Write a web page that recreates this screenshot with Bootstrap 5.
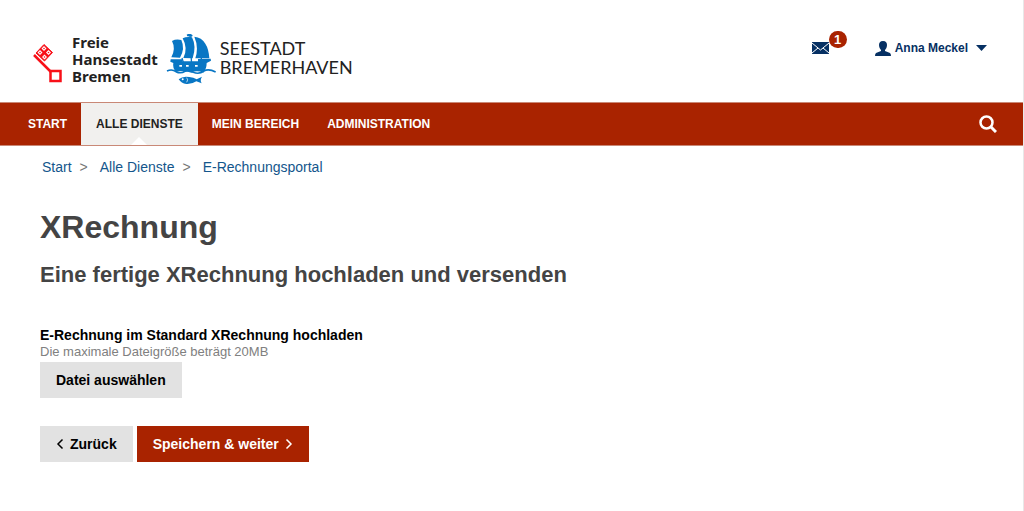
<!DOCTYPE html>
<html lang="de">
<head>
<meta charset="utf-8">
<meta name="viewport" content="width=device-width, initial-scale=1">
<title>XRechnung – E-Rechnungsportal</title>
<link href="https://cdn.jsdelivr.net/npm/bootstrap@5.3.0/dist/css/bootstrap.min.css" rel="stylesheet">
<style>
  :root { --brand: #a92300; --navy: #063063; --link: #14568c; }
  body { font-family: "Liberation Sans", Arial, sans-serif; color: #000; background: #fff; border-right: 1px solid #e8e8e8; min-height: 100vh; }
  svg { display: block; flex: none; }
  .site-header { min-height: 102px; padding: 0 36px 0 32px; }
  .narrow { font-family: "Liberation Sans Narrow", "Arial Narrow", "Liberation Sans", sans-serif; font-weight: 700; }
  .logo-bremen { font: 700 15px/17px "Noto Sans", sans-serif; color: #222; }
  .logo-seestadt { font: 400 18px/19px Lato, sans-serif; color: #222; padding-top: 5px; }
  .logos { padding-top: 34px; }
  .account { padding-top: 38px; color: var(--navy); font-size: 12px; line-height: 20px; }
  .account a { color: inherit; text-decoration: none; }
  .mail { margin-right: 46px; }
  .count { background: var(--brand); font-size: 13px; line-height: 17px; width: 18px; padding: 0; left: 17px; top: -11px; }
  .site-nav { background: var(--brand); padding: 0 26px 0 14px; border-top: 1px solid #c98876; border-bottom: 1px solid #c98876; }
  .site-nav .nav-link { color: #fff; font-size: 12px; line-height: 42px; padding: 0 14px; }
  .site-nav .nav-link.active { background: #f1f0ee; color: #222; position: relative; padding: 0 15px; }
  .site-nav .nav-link.active::after { content: ""; position: absolute; bottom: 0; left: 50%; margin-left: -8px; border: 8px solid transparent; border-top: 0; border-bottom-color: #fff; }
  .crumbs { padding: 10px 42px 0; font-size: 14px; line-height: 22px; }
  .crumbs .breadcrumb-item a { color: var(--link); text-decoration: none; }
  .crumbs .breadcrumb-item + .breadcrumb-item { padding-left: 8px; }
  .crumbs .breadcrumb-item + .breadcrumb-item::before { content: ">"; color: #777; padding-right: 12px; }
  main { padding: 27px 40px 40px; }
  h1 { font-size: 32px; line-height: 44px; font-weight: 700; color: #444; margin: 0; }
  h2 { font-size: 22px; line-height: 28px; font-weight: 700; color: #444; margin: 12px 0 37px; }
  .field-label { font-size: 14px; line-height: 18px; font-weight: 700; display: block; }
  .hint { font-size: 13px; line-height: 16px; color: #808080; margin-bottom: 2px; }
  .btn { border: 0; border-radius: 0; font-size: 14px; font-weight: 700; line-height: 20px; padding: 8px 16px; --bs-btn-color: #000; --bs-btn-bg: #e2e2e2; --bs-btn-hover-bg: #d4d4d4; }
  .btn-go { --bs-btn-color: #fff; --bs-btn-hover-color: #fff; --bs-btn-bg: var(--brand); --bs-btn-hover-bg: #8c1d00; }
  .actions { margin-top: 28px; gap: 4px; }
  .actions .btn { gap: 6px; }
</style>
</head>
<body>
<header class="site-header d-flex justify-content-between align-items-start">
  <div class="logos d-flex align-items-start">
    <svg width="32" height="50" viewBox="0 0 32 50" fill="none" stroke="#f81018">
      <path d="M2 21 19 38" stroke-width="2.500"/>
      <path d="M12 10.500 20.500 18.500 12.500 27 4 19Z" fill="#f81018" stroke-width="1"/>
      <g fill="#fff" stroke="none"><path d="m12 12 2.500 2.500L12 17l-2.500-2.500ZM16.500 16l2.500 2.500-2.500 2.500-2.500-2.500ZM8 16l2.500 2.500L8 21l-2.500-2.500ZM12.500 20.500 15 23l-2.500 2.500L10 23Z"/></g>
      <g fill="#f81018" stroke="none"><circle cx="12" cy="14.500" r=".8"/><circle cx="16.500" cy="18.500" r=".8"/><circle cx="8" cy="18.500" r=".8"/><circle cx="12.500" cy="23" r=".8"/></g>
      <rect x="18.500" y="37" width="10" height="10" stroke-width="2.500"/>
    </svg>
    <div class="logo-bremen ms-2">Freie<br>Hansestadt<br>Bremen</div>
    <svg class="ms-2" width="50" height="54" viewBox="12 18 150 162" fill="#0876c4">
      <path d="M30 39Q42 32 58 36 70 62 54 89L28 88Q42 62 30 39Z"/>
      <path d="M62 31Q74 25 90 28 104 55 92 91L64 90Q79 62 62 31Z"/>
      <path d="M74 20Q84 14 92 22L90 26 76 25ZM97 26Q119 28 130 47 140 62 142 91L100 91Q111 58 97 26Z"/>
      <path d="M26 94H60V100H108V93L146 92 147 98 134 105Q134 122 124 134 104 126 88 134 65 125 42 132 31 119 34 105L25 101Z"/>
      <path d="M84 22 90 132M60 90 65 106M118 88V104" fill="none" stroke="#0876c4" stroke-width="4"/>
      <path d="M15 129Q30 122 42 131 56 138 69 130 82 124 94 133 112 140 125 129 140 121 161 132" fill="none" stroke="#0876c4" stroke-width="5"/>
      <path d="M50 154Q62 143 82 147 95 148 104 154L120 146Q113 156 119 166L103 160Q90 169 73 168 58 166 50 154Z"/>
      <path d="M52 111h8v5h-8ZM72 111h8v5h-8ZM99 111h8v5h-8Z" fill="#fff"/>
      <circle cx="62" cy="154" r="3" fill="#fff"/><path d="M74 149q6 6 0 14" fill="none" stroke="#fff" stroke-width="2"/>
    </svg>
    <div class="logo-seestadt ms-1">SEESTADT<br>BREMERHAVEN</div>
  </div>
  <div class="account narrow d-flex align-items-center">
    <a class="mail position-relative" href="#" aria-label="Nachrichten"><svg width="17" height="12" viewBox="0 0 17 12"><path fill="currentColor" d="M0 0h17v12H0z"/><path fill="none" stroke="#fff" d="M0 1 8.500 8 17 1M0 11 6 6M17 11 11 6"/></svg><span class="count badge rounded-pill position-absolute">1</span></a>
    <a class="d-flex align-items-center" href="#"><svg class="me-1" width="16" height="15" viewBox="0 0 16 15" fill="currentColor"><path d="M8 0c3 0 4 2 4 4 0 2-1 4-2 5v1l5 2q1 1 1 3H0q0-2 1-3l5-2V9C5 8 4 6 4 4c0-2 1-4 4-4Z"/></svg>Anna Meckel<svg class="ms-2" width="11" height="6" viewBox="0 0 11 6" fill="currentColor"><path d="M0 0h11L5.500 6Z"/></svg></a>
  </div>
</header>
<nav class="site-nav narrow d-flex align-items-center justify-content-between">
  <div class="nav flex-nowrap">
    <a class="nav-link" href="#">START</a><a class="nav-link active" href="#">ALLE DIENSTE</a><a class="nav-link" href="#">MEIN BEREICH</a><a class="nav-link" href="#">ADMINISTRATION</a>
  </div>
  <a class="text-white" href="#" aria-label="Suche"><svg width="18" height="18" viewBox="0 0 18 18" fill="none" stroke="currentColor" stroke-width="2.500"><circle cx="7.500" cy="7.500" r="6"/><path d="m12 12 5 5" stroke-width="3"/></svg></a>
</nav>
<nav class="crumbs" aria-label="Brotkrumen"><ol class="breadcrumb m-0"><li class="breadcrumb-item"><a href="#">Start</a></li><li class="breadcrumb-item"><a href="#">Alle Dienste</a></li><li class="breadcrumb-item"><a href="#">E-Rechnungsportal</a></li></ol></nav>
<main>
  <h1>XRechnung</h1>
  <h2>Eine fertige XRechnung hochladen und versenden</h2>
  <label class="field-label" for="pick">E-Rechnung im Standard XRechnung hochladen</label>
  <div class="hint">Die maximale Dateigröße beträgt 20MB</div>
  <button class="btn" id="pick" type="button">Datei auswählen</button>
  <div class="actions d-flex flex-wrap">
    <button class="btn d-flex align-items-center" type="button"><svg width="8" height="12" viewBox="0 0 8 12" fill="none" stroke="currentColor" stroke-width="1.500"><path d="M6.500 1.500 2 6l4.500 4.500"/></svg>Zurück</button>
    <button class="btn btn-go d-flex align-items-center" type="submit">Speichern &amp; weiter<svg width="8" height="12" viewBox="0 0 8 12" fill="none" stroke="currentColor" stroke-width="1.500"><path d="M1.500 1.500 6 6l-4.500 4.500"/></svg></button>
  </div>
</main>
<script src="https://cdn.jsdelivr.net/npm/bootstrap@5.3.0/dist/js/bootstrap.bundle.min.js"></script>
</body>
</html>
